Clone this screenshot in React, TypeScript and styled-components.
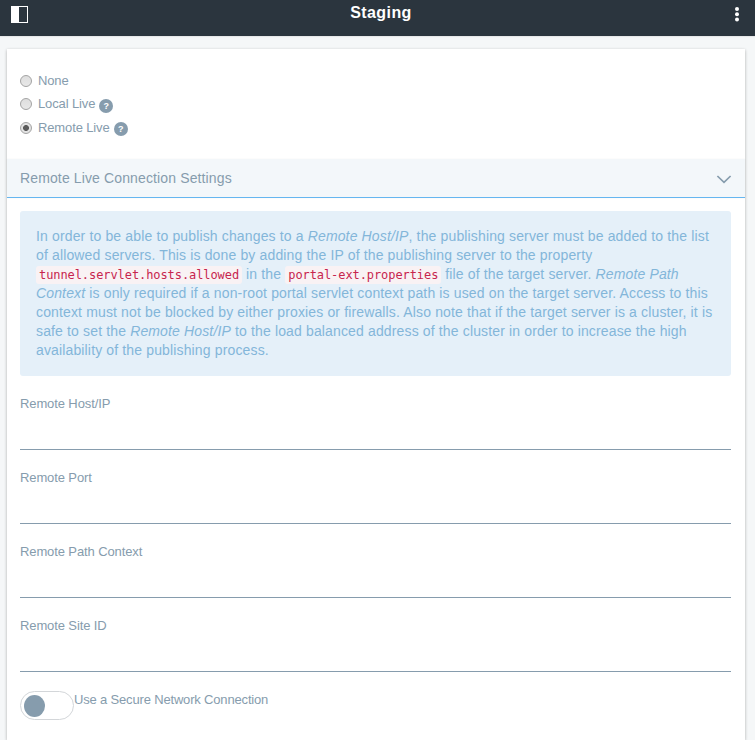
import React, { useState } from "react";
import styled, { createGlobalStyle } from "styled-components";

const GlobalStyle = createGlobalStyle`
  *, *::before, *::after { box-sizing: border-box; }
  html, body { margin: 0; height: 100%; overflow: hidden; background: #f5f7f8; }
  body { font-family: "Liberation Sans", Arial, sans-serif; font-size: 13px; color: #869cad; }
`;

const Page = styled.div`
  height: 740px;
  display: flex;
  flex-direction: column;
  overflow: hidden;
`;

const TopBar = styled.header`
  flex: 0 0 36px;
  display: flex;
  justify-content: space-between;
  align-items: flex-start;
  padding: 0 10px 0 11px;
  background: #2b353e;
  box-shadow: 0 1px 1px rgba(0, 0, 0, 0.06);
  color: #fff;
`;

const BarButton = styled.button<{ $top: number }>`
  display: flex;
  padding: 0;
  margin-top: ${(p) => p.$top}px;
  border: 0;
  background: none;
  color: inherit;
`;

const Title = styled.h1`
  margin: 3px 0 0;
  padding-left: 5px;
  font-size: 16px;
  line-height: 20px;
  letter-spacing: 0.42px;
`;

const Card = styled.main`
  flex: 1 0 auto;
  margin: 13px 10px 0 7px;
  background: #fff;
  box-shadow: 0 1px 3px rgba(0, 0, 0, 0.3);
`;

const Choices = styled.div`
  height: 110px;
  padding: 20px 13px 0;
`;

const Choice = styled.label`
  display: flex;
  height: 23.5px;
  align-items: center;
  line-height: 16px;
  letter-spacing: -0.13px;
`;

const Radio = styled.input`
  appearance: none;
  width: 12px;
  height: 12px;
  margin: 0 6px 0 0;
  border: 1px solid #a3a3a3;
  border-radius: 50%;
  background: linear-gradient(#dedede, #e8e8e8);
  &:checked {
    background: radial-gradient(circle, #5b5b5b 0 2.6px, #e3e3e3 3.3px);
  }
`;

const Help = styled.span`
  display: flex;
  align-items: center;
  justify-content: center;
  width: 14px;
  height: 14px;
  margin: 3px 0 0 4px;
  border-radius: 50%;
  background: #869cad;
  color: #fff;
  font: bold 9px/14px "Liberation Sans", Arial, sans-serif;
`;

const SectionHeader = styled.div`
  display: flex;
  height: 39px;
  align-items: center;
  justify-content: space-between;
  padding: 0 13px;
  border-bottom: 1px solid #65b6f0;
  background: #f3f7fa;
  font-size: 14px;
  letter-spacing: 0.13px;
  box-shadow: 0 0 1px rgba(0, 0, 0, 0.08);
`;

const Chevron = styled.svg`
  margin-top: 3px;
`;

const Section = styled.div`
  padding: 13px 14px 0 13px;
`;

const Alert = styled.p`
  height: 165px;
  margin: 0;
  padding: 16px;
  border-radius: 3px;
  background: #e5f0f9;
  color: #83b6d9;
  font-size: 14px;
  line-height: 19px;
  letter-spacing: 0.143px;
  white-space: nowrap;
`;

const Code = styled.code`
  padding: 2px 3px;
  border-radius: 3px;
  background: #f9f2f4;
  color: #c7254e;
  font: 12px/16px "DejaVu Sans Mono", monospace;
  letter-spacing: -0.08px;
`;

const Field = styled.label`
  display: flex;
  flex-direction: column;
  height: 74px;
  padding-top: 20px;
  line-height: 15px;
  letter-spacing: -0.11px;
`;

const Input = styled.input`
  height: 39px;
  padding: 0;
  border: 0;
  border-bottom: 1px solid #869cad;
  outline: 0;
  background: transparent;
  font: inherit;
  color: inherit;
`;

const ToggleRow = styled.label`
  display: flex;
  padding-top: 19px;
  line-height: 17px;
  letter-spacing: -0.17px;
`;

const Toggle = styled.button<{ $on: boolean }>`
  display: flex;
  align-items: center;
  justify-content: ${(p) => (p.$on ? "flex-end" : "flex-start")};
  width: 54px;
  height: 29px;
  padding: 0 3px;
  border: 1px solid #d3d6d9;
  border-radius: 15px;
  background: #fff;
  &::before {
    content: "";
    width: 21px;
    height: 22px;
    border-radius: 50%;
    background: #869cad;
  }
`;

const options = [
  { label: "None", help: false },
  { label: "Local Live", help: true },
  { label: "Remote Live", help: true },
];

const fields = ["Remote Host/IP", "Remote Port", "Remote Path Context", "Remote Site ID"];

export default function App() {
  const [choice, setChoice] = useState("Remote Live");
  const [secure, setSecure] = useState(false);
  return (
    <>
      <GlobalStyle />
      <Page>
        <TopBar>
          <BarButton $top={6} aria-label="Toggle sidebar">
            <svg width="17" height="17" shapeRendering="crispEdges">
              <rect x="0.5" y="0.5" width="16" height="16" fill="none" stroke="#fff" />
              <rect width="8" height="17" fill="#fff" />
            </svg>
          </BarButton>
          <Title>Staging</Title>
          <BarButton $top={6} aria-label="Options">
            <svg width="16" height="17" fill="#fff">
              <circle cx="8" cy="3" r="2" />
              <circle cx="8" cy="8.2" r="2" />
              <circle cx="8" cy="13.5" r="2" />
            </svg>
          </BarButton>
        </TopBar>
        <Card>
          <Choices>
            {options.map((o) => (
              <Choice key={o.label}>
                <Radio
                  type="radio"
                  name="staging"
                  checked={choice === o.label}
                  onChange={() => setChoice(o.label)}
                />
                {o.label}
                {o.help && <Help>?</Help>}
              </Choice>
            ))}
          </Choices>
          <SectionHeader>
            Remote Live Connection Settings
            <Chevron width="16" height="9" fill="none" stroke="#869cad" strokeWidth="1.7">
              <path d="M1.4 1 L8 7.3 L14.6 1" />
            </Chevron>
          </SectionHeader>
          <Section>
            <Alert>
              In order to be able to publish changes to a <em>Remote Host/IP</em>, the publishing server must be added to the list
              <br />
              of allowed servers. This is done by adding the IP of the publishing server to the property
              <br />
              <Code>tunnel.servlet.hosts.allowed</Code> in the <Code>portal-ext.properties</Code> file of the target server. <em>Remote Path</em>
              <br />
              <em>Context</em> is only required if a non-root portal servlet context path is used on the target server. Access to this
              <br />
              context must not be blocked by either proxies or firewalls. Also note that if the target server is a cluster, it is
              <br />
              safe to set the <em>Remote Host/IP</em> to the load balanced address of the cluster in order to increase the high
              <br />
              availability of the publishing process.
            </Alert>
            {fields.map((name) => (
              <Field key={name}>
                {name}
                <Input type="text" />
              </Field>
            ))}
            <ToggleRow>
              <Toggle $on={secure} onClick={() => setSecure(!secure)} aria-label="Secure connection" />
              Use a Secure Network Connection
            </ToggleRow>
          </Section>
        </Card>
      </Page>
    </>
  );
}
